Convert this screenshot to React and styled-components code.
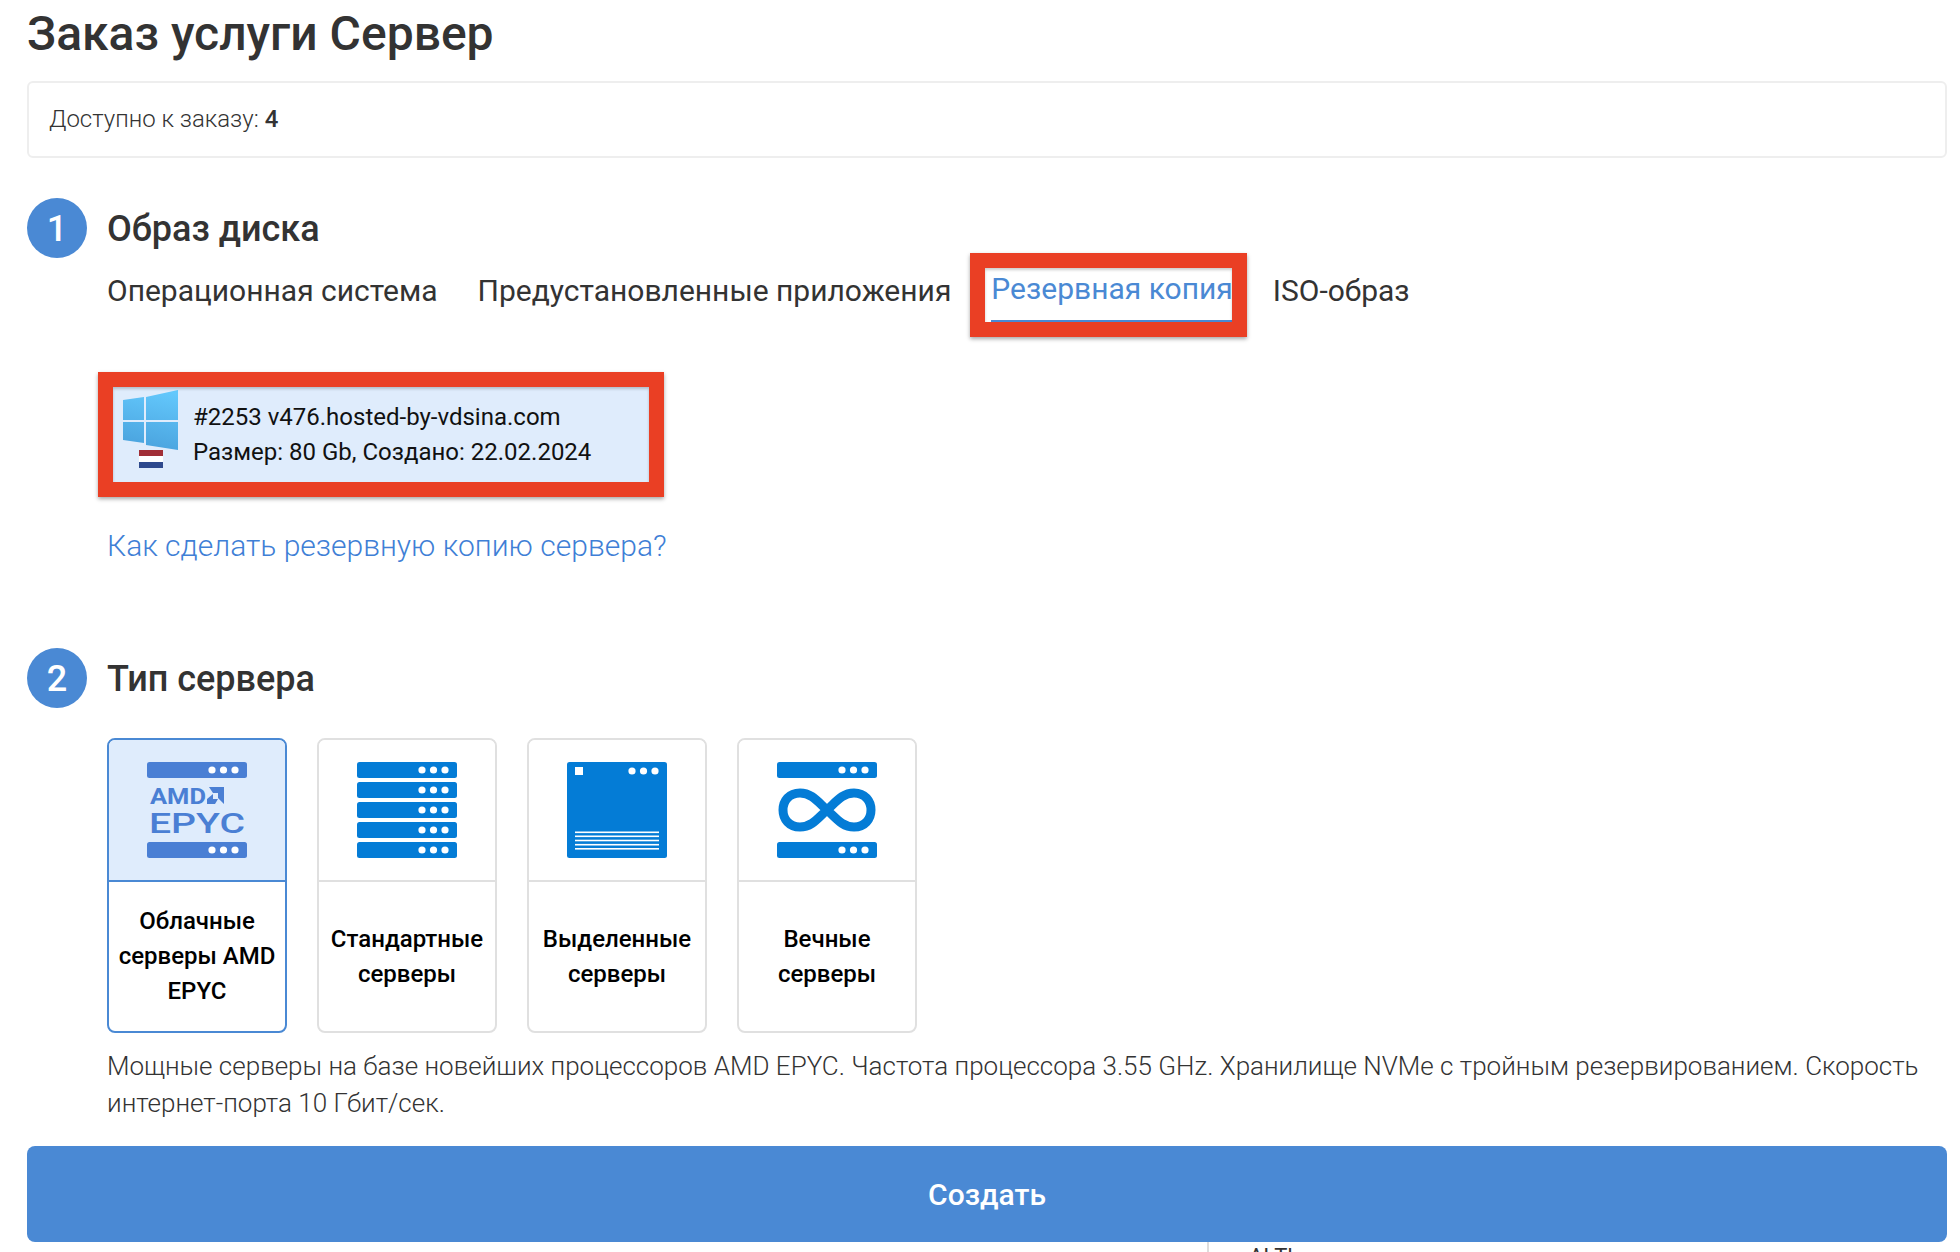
import React from "react";
import styled, { createGlobalStyle } from "styled-components";

const GlobalStyle = createGlobalStyle`
  html, body {
    margin: 0;
    padding: 0;
    background: #fff;
    overflow: hidden;
  }
  body {
    font-family: Roboto, "Noto Sans", sans-serif;
    color: #333;
  }
`;

const Page = styled.div`
  width: 1960px;
  height: 1252px;
  overflow: hidden;
  box-sizing: border-box;
  padding: 0 13px 0 27px;
`;

const Title = styled.h1`
  margin: 0;
  height: 81px;
  padding-top: 8px;
  box-sizing: border-box;
  font-size: 48px;
  line-height: 52px;
  font-weight: 500;
  color: #333;
`;

const InfoPanel = styled.div`
  height: 77px;
  box-sizing: border-box;
  border: 2px solid #eee;
  border-radius: 6px;
  padding: 0 20px 2px;
  display: flex;
  align-items: center;
  font-size: 24px;
  font-weight: 300;
  b {
    font-weight: 500;
    margin-left: 6px;
  }
`;

const StepRow = styled.div`
  display: flex;
  align-items: center;
  gap: 20px;
  height: 60px;
  margin-top: ${(p) => p.$top}px;
`;

const StepNumber = styled.div`
  width: 60px;
  height: 60px;
  box-sizing: border-box;
  padding-top: 2px;
  border-radius: 50%;
  background: #4a89d4;
  color: #fff;
  font-size: 36px;
  font-weight: 500;
  display: flex;
  align-items: center;
  justify-content: center;
`;

const StepTitle = styled.h2`
  margin: 0;
  padding-top: 2px;
  font-size: 36px;
  font-weight: 500;
  color: #333;
`;

const StepBody = styled.div`
  margin-left: 80px;
`;

const Tabs = styled.div`
  display: flex;
  gap: 40px;
  height: 64px;
`;

const Tab = styled.div`
  position: relative;
  font-size: 30px;
  line-height: 65px;
  white-space: nowrap;
  color: ${(p) => (p.$active ? "#4a89d4" : "#333")};
  ${(p) => p.$active && "line-height: 61px; height: 64px; box-sizing: border-box; border-bottom: 2px solid #4a89d4;"}
`;

const RedFrame = styled.div`
  position: absolute;
  box-sizing: border-box;
  top: ${(p) => p.$top}px;
  bottom: ${(p) => p.$bottom}px;
  left: ${(p) => p.$left}px;
  right: ${(p) => p.$right}px;
  border: 15px solid #ea3f24;
  box-shadow: 0 2px 4px rgba(0, 0, 0, 0.35), inset 0 2px 3px rgba(0, 0, 0, 0.2);
  pointer-events: none;
`;

const BackupCard = styled.div`
  position: relative;
  margin: 65px 0 0 6px;
  width: 536px;
  height: 95px;
  box-sizing: border-box;
  background: #dfecfc;
  display: flex;
  padding-left: 10px;
  gap: 15px;
`;

const OsLogo = styled.div`
  display: flex;
  flex-direction: column;
  align-items: center;
  padding-top: 3px;
  width: 55px;
`;

const BackupText = styled.div`
  font-size: 24px;
  line-height: 35px;
  color: #111;
  padding-top: 13px;
  white-space: nowrap;
`;

const HelpLink = styled.a`
  display: block;
  margin-top: 44px;
  font-size: 30px;
  line-height: 40px;
  font-weight: 300;
  color: #3f7fd6;
  text-decoration: none;
`;

const Cards = styled.div`
  display: flex;
  gap: 30px;
  margin-top: 30px;
`;

const Card = styled.div`
  width: 180px;
  height: 295px;
  box-sizing: border-box;
  border: 2px solid ${(p) => (p.$active ? "#4a89d4" : "#e0e0e0")};
  border-radius: 8px;
  overflow: hidden;
  display: flex;
  flex-direction: column;
`;

const CardIcon = styled.div`
  height: 142px;
  flex: none;
  box-sizing: border-box;
  display: flex;
  justify-content: center;
  padding-top: 22px;
  background: ${(p) => (p.$active ? "#dfecfc" : "#fff")};
  border-bottom: 2px solid ${(p) => (p.$active ? "#4a89d4" : "#e0e0e0")};
`;

const CardLabel = styled.div`
  flex: 1;
  display: flex;
  align-items: center;
  justify-content: center;
  text-align: center;
  font-size: 24px;
  line-height: 35px;
  font-weight: 500;
  color: #000;
  padding: 0 4px;
`;

const Description = styled.p`
  margin: 15px 0 0;
  font-size: 26px;
  line-height: 37px;
  font-weight: 300;
  color: #333;
`;

const SubmitButton = styled.button`
  display: block;
  width: 100%;
  height: 96px;
  margin-top: 24px;
  border: 0;
  border-radius: 8px;
  background: #4a89d4;
  color: #fff;
  font-family: inherit;
  font-size: 30px;
  font-weight: 500;
`;

const Remainder = styled.div`
  margin-left: 1180px;
  height: 10px;
  border-left: 2px solid #ddd;
  padding-left: 40px;
  font-size: 22px;
  line-height: 30px;
  color: #333;
`;

const Dots = ({ y, color }) => (
  <>
    {[65, 76.5, 88].map((x) => (
      <circle key={x} cx={x} cy={y} r="3.6" fill={color} />
    ))}
  </>
);

const Bar = ({ y, fill, dots = "#fff" }) => (
  <>
    <rect x="0" y={y} width="100" height="16" rx="2.5" fill={fill} />
    <Dots y={y + 8} color={dots} />
  </>
);

const IconSvg = ({ children }) => (
  <svg width="100" height="96" viewBox="0 0 100 96">
    {children}
  </svg>
);

const EpycIcon = () => (
  <IconSvg>
    <Bar y={0} fill="#4a7fd4" />
    <Bar y={80} fill="#4a7fd4" />
    <text x="3" y="42" textLength="56" lengthAdjust="spacingAndGlyphs" fontFamily="Roboto, sans-serif" fontWeight="700" fontSize="22.5" fill="#4a7fd4">
      AMD
    </text>
    <path d="M62 25h15v17l-6-6v-5h-5zM66 32v5h5l-3 5h-8v-5z" fill="#4a7fd4" />
    <text x="2" y="71" textLength="96" lengthAdjust="spacingAndGlyphs" fontFamily="Roboto, sans-serif" fontWeight="500" fontSize="28" fill="#4a7fd4">
      EPYC
    </text>
  </IconSvg>
);

const StandardIcon = () => (
  <IconSvg>
    {[0, 20, 40, 60, 80].map((y) => (
      <Bar key={y} y={y} fill="#047cd6" />
    ))}
  </IconSvg>
);

const DedicatedIcon = () => (
  <IconSvg>
    <rect width="100" height="96" rx="2.5" fill="#047cd6" />
    <rect x="8" y="5" width="8" height="8" fill="#fff" />
    <Dots y={9} color="#fff" />
    <g fill="#fff">
      {[69.5, 73.5, 77.7, 81.9, 86].map((y) => (
        <rect key={y} x="8" y={y} width="84" height="1.6" />
      ))}
    </g>
  </IconSvg>
);

const ForeverIcon = () => (
  <IconSvg>
    <Bar y={0} fill="#047cd6" />
    <Bar y={80} fill="#047cd6" />
    <path
      d="M50 48C41 40 35 31 23 31 12 31 6 39 6 48s6 17 17 17c12 0 18-9 27-17s15-17 27-17c11 0 17 8 17 17s-6 17-17 17c-12 0-18-9-27-17z"
      fill="none"
      stroke="#047cd6"
      strokeWidth="9"
    />
  </IconSvg>
);

const WindowsFlag = () => (
  <svg width="55" height="78" viewBox="0 0 55 78">
    <defs>
      <linearGradient id="win" x1="0.7" y1="0" x2="0.5" y2="1">
        <stop offset="0" stopColor="#63c8fc" />
        <stop offset="1" stopColor="#4aa3de" />
      </linearGradient>
    </defs>
    <path d="M0 10l21-3v23H0zM23 7l32-7v30H23zM0 32h21v21L0 50zM23 32h32v28l-32-5z" fill="url(#win)" />
    <rect x="16" y="60" width="24" height="6" fill="#a12e36" />
    <rect x="16" y="66" width="24" height="6" fill="#fff" />
    <rect x="16" y="72" width="24" height="6" fill="#2f4a8d" />
  </svg>
);

const serverTypes = [
  { id: "epyc", label: "Облачные серверы AMD EPYC", icon: <EpycIcon />, active: true },
  { id: "standard", label: "Стандартные серверы", icon: <StandardIcon /> },
  { id: "dedicated", label: "Выделенные серверы", icon: <DedicatedIcon /> },
  { id: "forever", label: "Вечные серверы", icon: <ForeverIcon /> },
];

const App = () => {
  return (
    <Page>
      <GlobalStyle />
      <Title>Заказ услуги Сервер</Title>
      <InfoPanel>
        Доступно к заказу: <b>4</b>
      </InfoPanel>

      <StepRow $top={40}>
        <StepNumber>1</StepNumber>
        <StepTitle>Образ диска</StepTitle>
      </StepRow>
      <StepBody>
        <Tabs>
          <Tab>Операционная система</Tab>
          <Tab>Предустановленные приложения</Tab>
          <Tab $active>
            Резервная копия
            <RedFrame $top={-5} $bottom={-17} $left={-21} $right={-14} />
          </Tab>
          <Tab>ISO-образ</Tab>
        </Tabs>
        <BackupCard>
          <OsLogo>
            <WindowsFlag />
          </OsLogo>
          <BackupText>
            #2253 v476.hosted-by-vdsina.com
            <br />
            Размер: 80 Gb, Создано: 22.02.2024
          </BackupText>
          <RedFrame $top={-15} $bottom={-15} $left={-15} $right={-15} />
        </BackupCard>
        <HelpLink href="#">Как сделать резервную копию сервера?</HelpLink>
      </StepBody>

      <StepRow $top={82}>
        <StepNumber>2</StepNumber>
        <StepTitle>Тип сервера</StepTitle>
      </StepRow>
      <StepBody>
        <Cards>
          {serverTypes.map((t) => (
            <Card key={t.id} $active={t.active}>
              <CardIcon $active={t.active}>{t.icon}</CardIcon>
              <CardLabel>{t.label}</CardLabel>
            </Card>
          ))}
        </Cards>
        <Description>
          Мощные серверы на базе новейших процессоров AMD EPYC. Частота процессора 3.55 GHz. Хранилище NVMe с тройным
          резервированием. Скорость интернет-порта 10 Гбит/сек.
        </Description>
      </StepBody>
      <SubmitButton>Создать</SubmitButton>
      <Remainder>AI Th</Remainder>
    </Page>
  );
};

export default App;
